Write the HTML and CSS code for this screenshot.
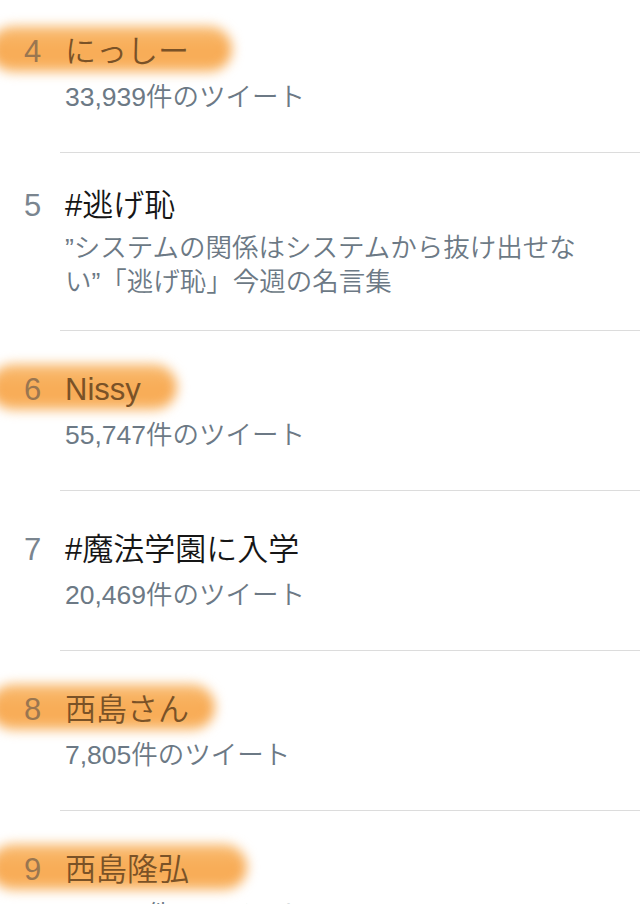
FILE: index.html
```html
<!DOCTYPE html>
<html lang="ja">
<head>
<meta charset="utf-8">
<title>トレンド</title>
<link rel="stylesheet" href="styles.css">
</head>
<body>
<ol class="trends">
  <li class="trend hl" style="--hl-w: 242px">
    <div class="rank">4</div>
    <div class="body">
      <div class="title">にっしー</div>
      <div class="meta">33,939件のツイート</div>
    </div>
  </li>
  <li class="trend multi">
    <div class="rank">5</div>
    <div class="body">
      <div class="title">#逃げ恥</div>
      <div class="meta">”システムの関係はシステムから抜け出せない”「逃げ恥」今週の名言集</div>
    </div>
  </li>
  <li class="trend hl" style="--hl-w: 187px">
    <div class="rank">6</div>
    <div class="body">
      <div class="title">Nissy</div>
      <div class="meta">55,747件のツイート</div>
    </div>
  </li>
  <li class="trend">
    <div class="rank">7</div>
    <div class="body">
      <div class="title">#魔法学園に入学</div>
      <div class="meta">20,469件のツイート</div>
    </div>
  </li>
  <li class="trend hl" style="--hl-w: 225px">
    <div class="rank">8</div>
    <div class="body">
      <div class="title">西島さん</div>
      <div class="meta">7,805件のツイート</div>
    </div>
  </li>
  <li class="trend hl" style="--hl-w: 257px">
    <div class="rank">9</div>
    <div class="body">
      <div class="title">西島隆弘</div>
      <div class="meta">14,102件のツイート</div>
    </div>
  </li>
</ol>
</body>
</html>
```
FILE: styles.css
```css
html, body {
  margin: 0;
  padding: 0;
  background: #ffffff;
}

body {
  font-family: "Liberation Sans", "Noto Sans CJK JP", sans-serif;
  overflow: hidden;
}

.trends {
  list-style: none;
  margin: -7px 0 0 0;
  padding: 0;
}

.trend {
  position: relative;
  isolation: isolate;
  display: flex;
}

.rank {
  width: 60px;
  box-sizing: border-box;
  padding: 39px 0 0 24px;
  font-size: 31px;
  line-height: 40px;
  color: #7a858f;
}

.body {
  flex: 1;
  min-width: 0;
  padding: 39px 50px 38px 5px;
  border-bottom: 1px solid #dcdcdc;
}

.title {
  font-size: 31px;
  line-height: 40px;
  font-weight: 350;
  color: #161616;
  white-space: nowrap;
}

.meta {
  margin-top: 8px;
  font-size: 26.5px;
  line-height: 34px;
  font-weight: 350;
  color: #6c7985;
}

.trend.multi .rank,
.trend.multi .body {
  padding-top: 33px;
}

.trend.multi .body {
  padding-bottom: 31px;
}

.trend.multi .meta {
  margin-top: 5px;
}

/* hand-drawn highlighter stroke */
.trend.hl::before {
  content: "";
  position: absolute;
  z-index: -1;
  left: -10px;
  top: 33px;
  width: var(--hl-w);
  height: 46px;
  border-radius: 23px;
  background: linear-gradient(180deg, #f9bd74 0%, #f8ad58 45%, #f8ab55 70%, #f9b96c 100%);
  filter: blur(6px);
}

.trend.hl .rank {
  color: #9a7650;
}

.trend.hl .title {
  color: #7a5227;
}
```
